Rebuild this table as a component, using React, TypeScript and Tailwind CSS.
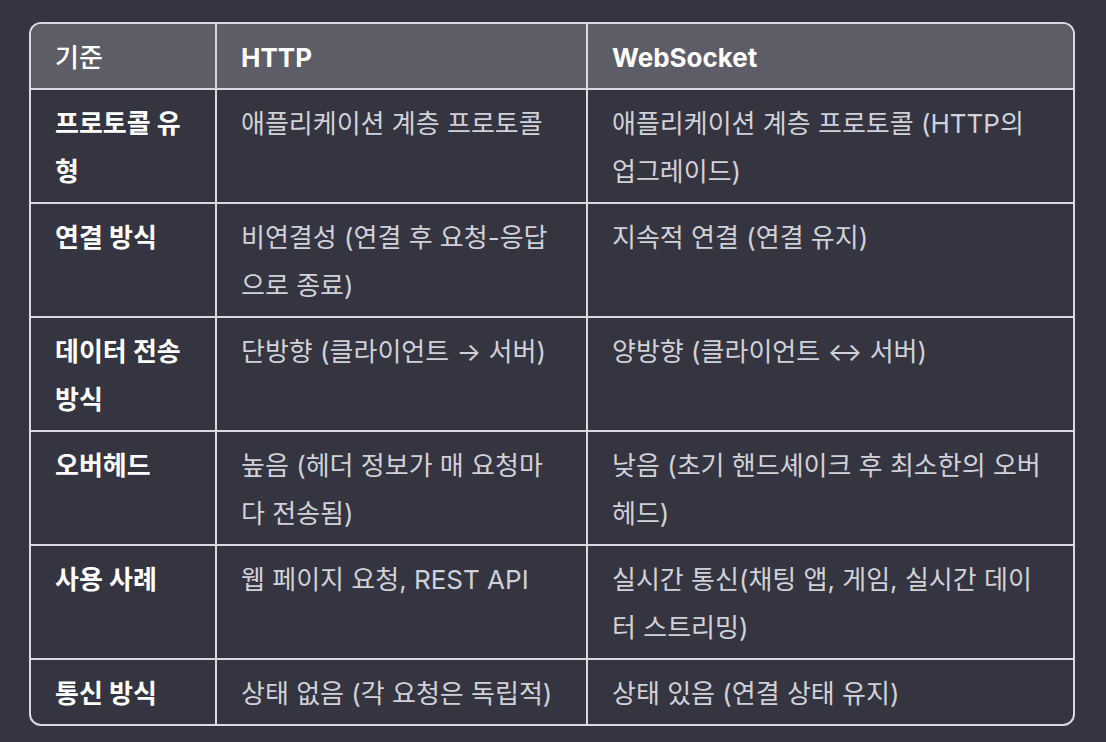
const rows: { label: string[]; http: string[]; ws: string[] }[] = [
  {
    label: ['프로토콜 유', '형'],
    http: ['애플리케이션 계층 프로토콜'],
    ws: ['애플리케이션 계층 프로토콜 (HTTP의', '업그레이드)'],
  },
  {
    label: ['연결 방식'],
    http: ['비연결성 (연결 후 요청-응답', '으로 종료)'],
    ws: ['지속적 연결 (연결 유지)'],
  },
  {
    label: ['데이터 전송', '방식'],
    http: ['단방향 (클라이언트 → 서버)'],
    ws: ['양방향 (클라이언트 ↔ 서버)'],
  },
  {
    label: ['오버헤드'],
    http: ['높음 (헤더 정보가 매 요청마', '다 전송됨)'],
    ws: ['낮음 (초기 핸드셰이크 후 최소한의 오버', '헤드)'],
  },
  {
    label: ['사용 사례'],
    http: ['웹 페이지 요청, REST API'],
    ws: ['실시간 통신(채팅 앱, 게임, 실시간 데이', '터 스트리밍)'],
  },
  {
    label: ['통신 방식'],
    http: ['상태 없음 (각 요청은 독립적)'],
    ws: ['상태 있음 (연결 상태 유지)'],
  },
]

function Lines({ lines }: { lines: string[] }) {
  return (
    <>
      {lines.map((l, i) => (
        <span key={i} className="block whitespace-nowrap">
          {l}
        </span>
      ))}
    </>
  )
}

export default function App() {
  return (
    <div className="min-h-screen w-full bg-[#343541] pt-[22px] pl-[29px] font-['Inter','Noto_Sans_CJK_KR',sans-serif] text-[26px] leading-[48px]">
      <div className="w-[1046px] rounded-[12px] border-2 border-[#d9d9e3] overflow-hidden">
        <table className="w-full border-separate border-spacing-0 table-fixed">
          <colgroup>
            <col className="w-[186px]" />
            <col className="w-[371px]" />
            <col />
          </colgroup>
          <thead>
            <tr className="bg-[#5d5d67] text-white text-left">
              <th className="h-[66px] px-[24px] pt-[10px] pb-[6px] font-medium border-r-2 border-b-2 border-[#d9d9e3]">기준</th>
              <th className="px-[24px] pt-[10px] pb-[6px] font-bold border-r-2 border-b-2 border-[#d9d9e3]">HTTP</th>
              <th className="px-[24px] pt-[10px] pb-[6px] font-bold border-b-2 border-[#d9d9e3]">WebSocket</th>
            </tr>
          </thead>
          <tbody>
            {rows.map((r, i) => {
              const last = i === rows.length - 1
              const edge = last ? 'h-[63px]' : 'h-[114px] border-b-2'
              return (
                <tr key={i} className="align-top">
                  <td className={`px-[24px] pt-[10px] pb-[6px] font-bold text-white border-r-2 border-[#d9d9e3] ${edge}`}>
                    <Lines lines={r.label} />
                  </td>
                  <td className={`px-[24px] pt-[10px] pb-[6px] text-[#d1d1d9] border-r-2 border-[#d9d9e3] ${edge}`}>
                    <Lines lines={r.http} />
                  </td>
                  <td className={`px-[24px] pt-[10px] pb-[6px] text-[#d1d1d9] border-[#d9d9e3] ${edge}`}>
                    <Lines lines={r.ws} />
                  </td>
                </tr>
              )
            })}
          </tbody>
        </table>
      </div>
    </div>
  )
}
